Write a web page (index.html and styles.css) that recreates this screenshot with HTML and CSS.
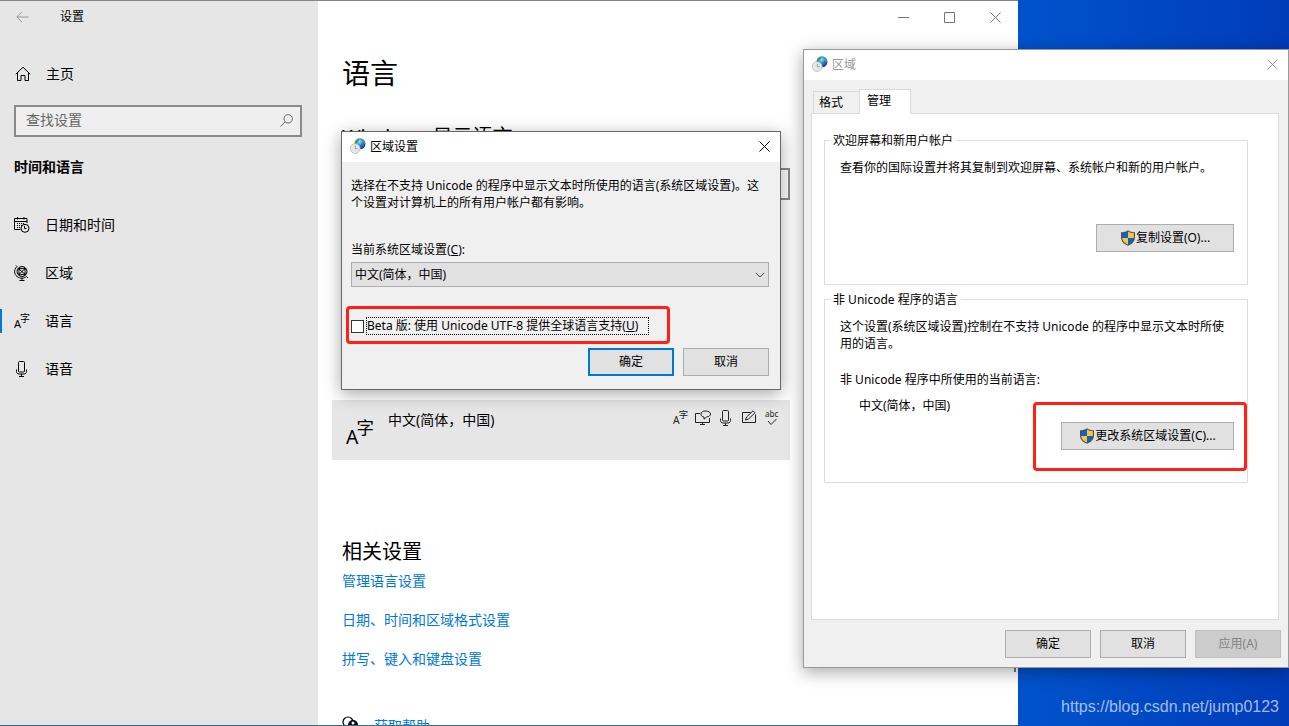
FILE: index.html
```html
<!DOCTYPE html>
<html lang="zh-CN">

<head>
    <meta charset="UTF-8">
    <meta name="viewport" content="width=device-width, initial-scale=1.0">
    <title>设置</title>
    <link rel="stylesheet" href="styles.css">
</head>

<body>
    <!-- Shared icons -->
    <svg class="icon-defs" aria-hidden="true">
        <defs>
            <radialGradient id="globe-fill" cx="0.45" cy="0.3" r="0.7">
                <stop offset="0" stop-color="#9fe4ff"></stop>
                <stop offset="0.45" stop-color="#2f86d8"></stop>
                <stop offset="1" stop-color="#12308f"></stop>
            </radialGradient>
        </defs>
        <symbol id="globe-clock" viewBox="0 0 16 16">
            <circle cx="10" cy="5.8" r="5.5" fill="url(#globe-fill)"></circle>
            <path d="M5 3.500C6 1.200 8 .4 9.500.4L8.600 3 6.800 4.500 6 7.500 4.600 6.500z" fill="#35a03c"></path>
            <path d="M12.500 1.500l2 2 .8 2.500-1.600-.8-1.400-2z" fill="#44aa55"></path>
            <circle cx="5.200" cy="10.600" r="4.900" fill="#e3e8ea" stroke="#b4bdc1" stroke-width="0.800"></circle>
            <path d="M5.400 7.800v3h2.200" fill="none" stroke="#7d8a92" stroke-width="0.800"></path>
        </symbol>
        <symbol id="shield" viewBox="0 0 16 16">
            <path d="M8 .3C6 1.700 3.700 2.300 1 2.300V7c0 4.300 2.600 7.100 7 8.700 4.400-1.600 7-4.400 7-8.700V2.300C12.300 2.300 10 1.700 8 .3z" fill="#4d4d4d"></path>
            <path d="M8 1.600C6.200 2.700 4.300 3.200 2.100 3.300V8H8z" fill="#0a64c8"></path>
            <path d="M8 1.600C9.800 2.700 11.700 3.200 13.900 3.300V8H8z" fill="#ffc23c"></path>
            <path d="M2.100 8c.4 3.200 2.500 5.200 5.900 6.600V8z" fill="#ffc23c"></path>
            <path d="M13.900 8c-.4 3.200-2.500 5.200-5.900 6.600V8z" fill="#0a64c8"></path>
        </symbol>
        <symbol id="close" viewBox="0 0 11 11">
            <path d="M.5.5l10 10M10.500.5l-10 10" fill="none" stroke="currentColor"></path>
        </symbol>
        <symbol id="mic" viewBox="0 0 16 16">
            <rect x="4.500" y=".5" width="6" height="10.500" rx="1"></rect>
            <path d="M2.500 8.500v2c0 1.700 1 2.500 2.500 2.500h5c1.500 0 2.500-.8 2.500-2.500v-2M7.500 13v2.500M5 15.500h5"></path>
        </symbol>
        <symbol id="lang" viewBox="0 0 16 16">
            <text x="0" y="15" font-size="11">A</text>
            <text x="6" y="9" font-size="10">字</text>
        </symbol>
    </svg>

    <!-- Settings window -->
    <div class="settings">
        <aside class="sidebar">
            <div class="sidebar-title">
                <button class="plain" aria-label="后退">
                    <svg class="line back" width="13" height="12" viewBox="0 0 13 12"><path d="M12.500 6H1M6 .8L.8 6 6 11.200"></path></svg>
                </button>
                <span>设置</span>
            </div>
            <a class="home" href="#">
                <svg class="line" width="16" height="16" viewBox="0 0 16 16"><path d="M.8 8.200L8 1.200l7.200 7M2.500 7v7.500h3.500V9.500h4v5h3.500V7"></path></svg>
                <span>主页</span>
            </a>
            <div class="search">
                <input type="text" placeholder="查找设置" aria-label="查找设置">
                <svg class="line" width="13" height="13" viewBox="0 0 13 13"><circle cx="8.200" cy="4.800" r="4.200"></circle><path d="M5.200 7.800L.5 12.500"></path></svg>
            </div>
            <h2>时间和语言</h2>
            <nav>
                <a href="#">
                    <svg class="line" width="16" height="16" viewBox="0 0 16 16">
                        <path d="M6.500 12.500h-6v-11h12.500v4.500M.5 4.500h12.500M3.500 0v2.500M10 0v2.500"></path>
                        <path d="M3 6.500h7M3 8.500h5M3 10.500h3" stroke-dasharray="1 1"></path>
                        <circle cx="11" cy="11.300" r="4"></circle>
                        <path d="M10.500 9v2.500h2"></path>
                    </svg>
                    <span>日期和时间</span>
                </a>
                <a href="#">
                    <svg class="line" width="16" height="16" viewBox="0 0 16 16">
                        <circle cx="8" cy="6.500" r="5"></circle>
                        <path d="M4.200 3.200l7.600 6.800M11.500 3L4.500 10M3.500 5c2-2 7-2 9 0M3.500 8c2 2 7 2 9 0M6 2c-1.500 3-1.500 6 0 9M10 2c1.500 3 1.500 6 0 9"></path>
                        <path d="M2 .5l1.500 1.500M2.500 2C0 5-.2 9 3 11.500s7 2 9.500 0L14 13M8 13v2.500M5.500 15.500h5"></path>
                    </svg>
                    <span>区域</span>
                </a>
                <a class="active" href="#">
                    <svg class="glyph" width="16" height="16"><use href="#lang"></use></svg>
                    <span>语言</span>
                </a>
                <a href="#">
                    <svg class="line" width="16" height="16"><use href="#mic"></use></svg>
                    <span>语音</span>
                </a>
            </nav>
        </aside>

        <main class="content">
            <div class="caption-buttons">
                <button class="plain" aria-label="最小化"><svg class="line" width="11" height="11" viewBox="0 0 11 11"><path d="M0 5.500h11"></path></svg></button>
                <button class="plain" aria-label="最大化"><svg class="line" width="11" height="11" viewBox="0 0 11 11"><path d="M.5.5h10v10h-10z"></path></svg></button>
                <button class="plain" aria-label="关闭"><svg width="11" height="11"><use href="#close"></use></svg></button>
            </div>
            <h1>语言</h1>
            <h2>Windows 显示语言</h2>
            <select class="display-language" aria-label="Windows 显示语言">
                <option></option>
            </select>
            <div class="language-item">
                <svg class="glyph" width="28" height="28" viewBox="0 0 16 16"><use href="#lang"></use></svg>
                <span class="language-name">中文(简体，中国)</span>
                <div class="features">
                    <svg class="glyph" width="15" height="15" viewBox="0 0 16 16"><use href="#lang"></use></svg>
                    <svg class="line" width="16" height="16" viewBox="0 0 16 16">
                        <path d="M5 3.500H.5v9h14V8M7.500 12.500v2M5 14.500h5"></path>
                        <path d="M10.500 1C7.800 1 6 2.200 6 4s1.200 2.800 3 3v2.200L11.500 7C14 6.800 15.500 5.600 15.500 4S13.500 1 10.500 1z"></path>
                    </svg>
                    <svg class="line" width="16" height="16"><use href="#mic"></use></svg>
                    <svg class="line" width="16" height="16" viewBox="0 0 16 16">
                        <path d="M9.500 2.500h-8v10h13v-8"></path>
                        <path d="M4.500 10l1-3L12 .8l2 2L7.500 9z"></path>
                    </svg>
                    <svg class="line" width="16" height="16" viewBox="0 0 16 16">
                        <text x="1" y="7" font-size="8">abc</text>
                        <path d="M4 11l3 3.500 5.500-5.500"></path>
                    </svg>
                </div>
            </div>
            <h2>相关设置</h2>
            <a href="#">管理语言设置</a>
            <a href="#">日期、时间和区域格式设置</a>
            <a href="#">拼写、键入和键盘设置</a>
            <div class="help">
                <svg width="18" height="18" viewBox="0 0 18 18">
                    <circle cx="6" cy="6" r="5" fill="none" stroke="#000" stroke-width="1.200"></circle>
                    <circle cx="11" cy="9" r="5" fill="#000"></circle>
                    <circle cx="11" cy="7" r="1.500" fill="#fff"></circle>
                </svg>
                <a href="#">获取帮助</a>
            </div>
        </main>
    </div>

    <!-- Region dialog -->
    <div class="dialog region" role="dialog" aria-label="区域">
        <header>
            <svg width="16" height="16"><use href="#globe-clock"></use></svg>
            <span>区域</span>
            <button class="plain" aria-label="关闭"><svg width="11" height="11"><use href="#close"></use></svg></button>
        </header>
        <div class="tabs">
            <button class="tab">格式</button>
            <button class="tab selected">管理</button>
        </div>
        <div class="panel">
            <fieldset>
                <legend>欢迎屏幕和新用户帐户</legend>
                <p>查看你的国际设置并将其复制到欢迎屏幕、系统帐户和新的用户帐户。</p>
                <div class="action copy">
                    <button class="btn"><svg width="16" height="16"><use href="#shield"></use></svg>复制设置(O)...</button>
                </div>
            </fieldset>
            <fieldset>
                <legend>非 Unicode 程序的语言</legend>
                <p>这个设置(系统区域设置)控制在不支持 Unicode 的程序中显示文本时所使用的语言。</p>
                <p class="current">非 Unicode 程序中所使用的当前语言:</p>
                <p class="value">中文(简体，中国)</p>
                <div class="action change marked">
                    <button class="btn"><svg width="16" height="16"><use href="#shield"></use></svg>更改系统区域设置(C)...</button>
                </div>
            </fieldset>
        </div>
        <footer>
            <button class="btn">确定</button>
            <button class="btn">取消</button>
            <button class="btn" disabled>应用(A)</button>
        </footer>
    </div>

    <!-- System locale dialog -->
    <div class="dialog locale" role="dialog" aria-label="区域设置">
        <header>
            <svg width="16" height="16"><use href="#globe-clock"></use></svg>
            <span>区域设置</span>
            <button class="plain" aria-label="关闭"><svg width="11" height="11"><use href="#close"></use></svg></button>
        </header>
        <div class="locale-body">
            <p>选择在不支持 Unicode 的程序中显示文本时所使用的语言(系统区域设置)。这个设置对计算机上的所有用户帐户都有影响。</p>
            <label class="locale-label" for="locale">当前系统区域设置(<u>C</u>):</label>
            <div class="select">
                <select id="locale">
                    <option>中文(简体，中国)</option>
                </select>
                <svg class="line" width="10" height="6" viewBox="0 0 10 6"><path d="M.8.8L5 5 9.200.8"></path></svg>
            </div>
            <div class="beta marked">
                <input type="checkbox" id="utf8">
                <label for="utf8">Beta 版: 使用 Unicode UTF-8 提供全球语言支持(<u>U</u>)</label>
            </div>
            <footer>
                <button class="btn default">确定</button>
                <button class="btn">取消</button>
            </footer>
        </div>
    </div>

    <div class="watermark">https://blog.csdn.net/jump0123</div>
</body>

</html>
```
FILE: styles.css
```css
* {
    box-sizing: border-box;
    margin: 0;
    padding: 0;
}

body {
    position: relative;
    height: 100vh;
    overflow: hidden;
    font-family: "Noto Sans", "Noto Sans CJK SC", sans-serif;
    font-size: 12px;
    line-height: 17px;
    color: #000;
    background: linear-gradient(to right, #0052cc 80%, #003cb8);
}

button,
input,
select {
    font: inherit;
    color: inherit;
}

a {
    color: #0078d7;
    text-decoration: none;
}

svg {
    display: block;
    flex: none;
    overflow: visible;
}

.icon-defs {
    position: absolute;
    width: 0;
    height: 0;
}

.line {
    fill: none;
    stroke: currentColor;
}

.line text {
    fill: currentColor;
    stroke: none;
}

.glyph {
    fill: currentColor;
}

.plain {
    border: none;
    background: none;
}
/* Settings window */

.settings {
    position: absolute;
    inset: 0 271px 0 0;
    display: grid;
    grid-template-columns: 318px 1fr;
    overflow: hidden;
    background: #fff;
    border-top: 1px solid #858585;
    border-bottom: 1px solid #2b6f9e;
    font-size: 14px;
    line-height: 20px;
}
/* Scrollbar thumb */

.settings::after {
    content: "";
    position: absolute;
    top: 60px;
    right: 2px;
    bottom: 53px;
    width: 2px;
    background: #777;
}

.sidebar {
    background: #e6e6e6;
}

.sidebar-title {
    display: flex;
    align-items: center;
    gap: 31px;
    height: 32px;
    padding-left: 16px;
    font-size: 12px;
}

.back {
    color: #999;
}

.home,
.sidebar nav a {
    display: flex;
    align-items: center;
    gap: 15px;
    height: 48px;
    padding-left: 15px;
    color: #000;
}

.home {
    margin-top: 17px;
}

.search {
    display: flex;
    align-items: center;
    height: 32px;
    margin: 7px 16px 0 14px;
    padding: 0 7px 2px 10px;
    background: #efefef;
    border: 2px solid #8a8a8a;
    color: #666;
}

.search input {
    flex: 1;
    min-width: 0;
    border: none;
    outline: none;
    background: none;
}

.search input::placeholder {
    color: #666;
}

.sidebar h2 {
    margin: 20px 0 25px 14px;
    font-size: 14px;
    font-weight: 700;
}

.sidebar nav a {
    position: relative;
    padding: 0 0 2px 14px;
}

.sidebar nav a.active::before {
    content: "";
    position: absolute;
    left: 0;
    top: 11px;
    width: 2px;
    height: 24px;
    background: #0078d7;
}

.content {
    display: flex;
    flex-direction: column;
    align-items: flex-start;
    padding-left: 24px;
}

.caption-buttons {
    display: flex;
    align-self: flex-end;
    height: 32px;
}

.caption-buttons button {
    display: grid;
    place-items: center;
    width: 46px;
    color: #777;
}

.content h1 {
    margin-top: 20px;
    font-size: 28px;
    font-weight: 400;
    line-height: 40px;
}

.content h2 {
    font-size: 20px;
    font-weight: 400;
    line-height: 28px;
}

.content h1 + h2 {
    margin-top: 30px;
}

.display-language {
    width: 448px;
    height: 32px;
    margin-top: 17px;
    appearance: none;
    background: #fff;
    border: 2px solid #8a8a8a;
}

.language-item {
    display: flex;
    width: 458px;
    height: 60px;
    margin: 200px 0 78px -10px;
    padding: 10px 10px 10px 14px;
    background: #e6e6e6;
}

.language-item > .glyph {
    margin-top: 8px;
}

.language-name {
    margin-left: 14px;
}

.features {
    display: flex;
    gap: 7px;
    margin-left: auto;
    color: #222;
}

.content h2 + a {
    margin-top: 5px;
}

.content > a {
    margin: 6px 0 13px;
}

.help {
    display: flex;
    gap: 14px;
    margin-top: 34px;
}
/* Dialogs */

.dialog {
    position: absolute;
    background: #f0f0f0;
    border: 1px solid #777;
    box-shadow: 0 4px 16px rgba(0, 0, 0, 0.35);
}

.dialog header {
    display: flex;
    align-items: center;
    gap: 4px;
    height: 30px;
    padding: 0 10px 2px 8px;
    background: #fff;
}

.dialog header button {
    margin-left: auto;
}

.dialog footer {
    display: flex;
    justify-content: flex-end;
    gap: 9px;
}

.btn {
    display: flex;
    align-items: center;
    justify-content: center;
    min-width: 86px;
    height: 28px;
    padding-bottom: 1px;
    background: #e1e1e1;
    border: 1px solid #adadad;
}

.btn.default {
    border: 2px solid #0078d7;
}

.btn:disabled {
    color: #838383;
    background: #ccc;
    border-color: #bfbfbf;
}

.marked {
    position: relative;
}

.marked::after {
    content: "";
    position: absolute;
    border: 3px solid #ff2016;
    border-radius: 4px;
    pointer-events: none;
}
/* Region dialog */

.region {
    top: 49px;
    right: 0;
    width: 486px;
    border-color: #999;
}

.region header span,
.region header button {
    color: #999;
}

.tabs {
    display: flex;
    align-items: flex-end;
    padding: 9px 9px 0;
}

.tab {
    height: 22px;
    padding: 0 16px 0 5px;
    background: #f0f0f0;
    border: 1px solid #d9d9d9;
    border-width: 1px 0 0 1px;
}

.tab.selected {
    height: 25px;
    margin-bottom: -1px;
    padding: 0 19px 3px 7px;
    background: #fff;
    border-right-width: 1px;
    z-index: 1;
}

.panel {
    margin: 0 9px 0 7px;
    padding: 18px 30px 136px 12px;
    background: #fff;
    border: 1px solid #dcdcdc;
}

fieldset {
    padding: 10px 13px 32px 15px;
    border: 1px solid #dcdcdc;
}

fieldset + fieldset {
    margin-top: 6px;
}

legend {
    margin-left: -10px;
    padding: 0 3px;
    line-height: 17px;
}

.current {
    margin-top: 19px;
}

.value {
    margin: 9px 0 0 19px;
}

.action {
    width: fit-content;
    margin-left: auto;
}

.copy {
    margin-top: 48px;
}

.copy .btn {
    width: 138px;
}

.change {
    margin-top: 8px;
}

.change .btn {
    width: 173px;
}

.change::after {
    inset: -20px -13px -21px -28px;
}

.region footer {
    padding: 10px 7px 9px;
}
/* System locale dialog */

.locale {
    top: 131px;
    left: 341px;
    width: 440px;
    border-color: #666;
}

.locale-body {
    padding: 15px 11px 13px 9px;
}

.locale-label {
    display: block;
    margin: 30px 0 4px;
}

.select {
    position: relative;
}

.select select {
    width: 100%;
    height: 25px;
    padding-left: 3px;
    appearance: none;
    background: #e1e1e1;
    border: 1px solid #adadad;
    border-radius: 0;
}

.select svg {
    position: absolute;
    top: 10px;
    right: 4px;
    color: #444;
}

.beta {
    display: flex;
    align-items: center;
    gap: 2px;
    width: 298px;
    margin: 30px 0 13px;
}

.beta::after {
    inset: -11px -21px -9px -5px;
}

.beta input {
    width: 13px;
    height: 13px;
    appearance: none;
    background: #fff;
    border: 1px solid #333;
}

.beta label {
    flex: 1;
    height: 18px;
    border: 1px dotted #000;
    line-height: 16px;
}
/* Watermark */

.watermark {
    position: absolute;
    right: 10px;
    bottom: 10px;
    font: 16px/18px "Liberation Sans", Arial, sans-serif;
    color: rgba(255, 255, 255, 0.65);
}
```
